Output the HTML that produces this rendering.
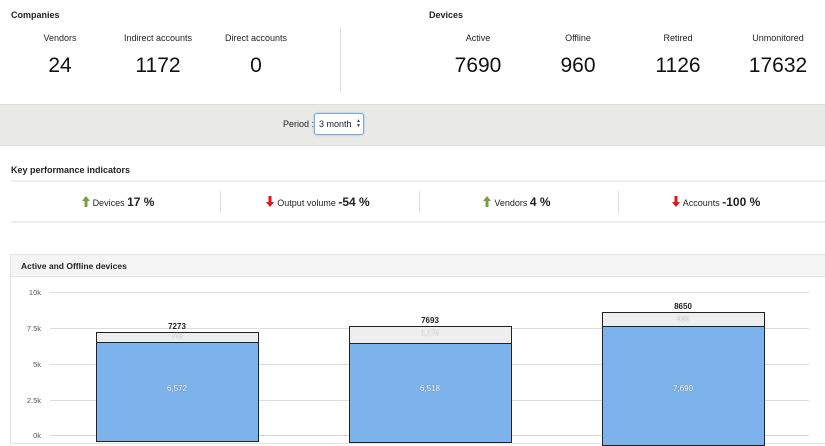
<!DOCTYPE html>
<html><head><style>
body{margin:0;width:825px;height:437px;overflow:hidden;background:#fff;font-family:"Liberation Sans",Arial,sans-serif;color:#222;position:relative}
.a{position:absolute}
.h{font-size:9px;font-weight:bold;color:#222}
.l{font-size:9px;text-align:center;width:120px;margin-left:-60px}
.n{font-size:21px;text-align:center;width:120px;margin-left:-60px;color:#111}
.k{font-size:9px;text-align:center;width:200px;margin-left:-100px;top:195px;white-space:nowrap}
.k b{font-size:12px}
.up{display:inline-block;width:8px;height:11px;vertical-align:-1px;margin-right:3px}
.g{height:1px;background:#ddd;left:50px;width:759px}
.y{font-size:7.5px;color:#555;width:30px;text-align:right;left:11px}
.bar{border:1px solid #222;box-sizing:border-box}
.v{font-size:8px;text-align:center;width:162px}
</style></head><body>
<div class="a h" style="left:11px;top:10px">Companies</div>
<div class="a h" style="left:429px;top:10px">Devices</div>
<div class="a l" style="left:60px;top:33px">Vendors</div>
<div class="a l" style="left:158px;top:33px">Indirect accounts</div>
<div class="a l" style="left:256px;top:33px">Direct accounts</div>
<div class="a l" style="left:478px;top:33px">Active</div>
<div class="a l" style="left:578px;top:33px">Offline</div>
<div class="a l" style="left:678px;top:33px">Retired</div>
<div class="a l" style="left:778px;top:33px">Unmonitored</div>
<div class="a n" style="left:60px;top:54px">24</div>
<div class="a n" style="left:158px;top:54px">1172</div>
<div class="a n" style="left:256px;top:54px">0</div>
<div class="a n" style="left:478px;top:54px">7690</div>
<div class="a n" style="left:578px;top:54px">960</div>
<div class="a n" style="left:678px;top:54px">1126</div>
<div class="a n" style="left:778px;top:54px">17632</div>
<div class="a" style="left:340px;top:27px;width:1px;height:64px;background:#ddd"></div>
<div class="a" style="left:0;top:104px;width:825px;height:40px;background:#e9e9e6;border-top:1px solid #ddd;border-bottom:1px solid #ddd"></div>
<div class="a" style="left:283px;top:119px;font-size:9px">Period :</div>
<div class="a" style="left:314px;top:113px;width:50px;height:22px;background:#fff;border:1px solid #7aa7d6;border-radius:3px;box-shadow:0 0 2px #9cc3ee;box-sizing:border-box"></div>
<div class="a" style="left:319px;top:119px;font-size:9px;white-space:nowrap">3 month</div>
<div class="a" style="left:356px;top:119px;font-size:5px;line-height:5px;color:#444">&#9650;<br>&#9660;</div>
<div class="a h" style="left:11px;top:165px">Key performance indicators</div>
<div class="a" style="left:11px;top:180px;width:814px;height:2px;background:#eee"></div>
<div class="a" style="left:11px;top:221px;width:814px;height:2px;background:#eee"></div>
<div class="a" style="left:220px;top:191px;width:1px;height:22px;background:#ddd"></div>
<div class="a" style="left:419px;top:191px;width:1px;height:22px;background:#ddd"></div>
<div class="a" style="left:618px;top:191px;width:1px;height:22px;background:#ddd"></div>
<div class="a k" style="left:118px"><svg class="up" viewBox="0 0 8 11"><path d="M4 0L8 5H5.5V11H2.5V5H0Z" fill="#77a13e"/></svg>Devices <b>17 %</b></div>
<div class="a k" style="left:318px"><svg class="up" viewBox="0 0 8 11"><path d="M4 11L8 6H5.5V0H2.5V6H0Z" fill="#e8121b"/></svg>Output volume <b>-54 %</b></div>
<div class="a k" style="left:517px"><svg class="up" viewBox="0 0 8 11"><path d="M4 0L8 5H5.5V11H2.5V5H0Z" fill="#77a13e"/></svg>Vendors <b>4 %</b></div>
<div class="a k" style="left:716px"><svg class="up" viewBox="0 0 8 11"><path d="M4 11L8 6H5.5V0H2.5V6H0Z" fill="#e8121b"/></svg>Accounts <b>-100 %</b></div>
<div class="a" style="left:10px;top:254px;width:820px;height:190px;border:1px solid #e2e2e2;box-sizing:border-box"></div>
<div class="a" style="left:11px;top:255px;width:814px;height:21px;background:#f5f5f5;border-bottom:1px solid #e2e2e2"></div>
<div class="a h" style="left:21px;top:261px;font-size:8.5px">Active and Offline devices</div>
<div class="a g" style="top:292px"></div><div class="a y" style="top:288px">10k</div>
<div class="a g" style="top:328px"></div><div class="a y" style="top:324px">7.5k</div>
<div class="a g" style="top:364px"></div><div class="a y" style="top:360px">5k</div>
<div class="a g" style="top:400px"></div><div class="a y" style="top:396px">2.5k</div>
<div class="a g" style="top:435px;background:#cdd7e6"></div><div class="a y" style="top:431px">0k</div>

<div class="a bar" style="left:96px;top:332px;width:163px;height:11px;background:#eee"></div>
<div class="a bar" style="left:96px;top:342px;width:163px;height:100px;background:#7cb3ea"></div>
<div class="a v" style="left:96px;top:322px;font-weight:bold">7273</div>
<div class="a v" style="left:96px;top:333px;color:#fff;font-size:7px;text-shadow:0 0 1px #777">703</div>
<div class="a v" style="left:96px;top:384px;color:#fff;text-shadow:0 0 1px #456">6,572</div>

<div class="a bar" style="left:349px;top:326px;width:163px;height:18px;background:#eee"></div>
<div class="a bar" style="left:349px;top:343px;width:163px;height:100px;background:#7cb3ea"></div>
<div class="a v" style="left:349px;top:316px;font-weight:bold">7693</div>
<div class="a v" style="left:349px;top:330px;color:#fff;font-size:7px;text-shadow:0 0 1px #777">1,176</div>
<div class="a v" style="left:349px;top:384px;color:#fff;text-shadow:0 0 1px #456">6,518</div>

<div class="a bar" style="left:602px;top:312px;width:163px;height:16px;background:#eee"></div>
<div class="a bar" style="left:602px;top:326px;width:163px;height:120px;background:#7cb3ea"></div>
<div class="a v" style="left:602px;top:302px;font-weight:bold">8650</div>
<div class="a v" style="left:602px;top:316px;color:#fff;font-size:7px;text-shadow:0 0 1px #777">960</div>
<div class="a v" style="left:602px;top:384px;color:#fff;text-shadow:0 0 1px #456">7,690</div>
</body></html>
